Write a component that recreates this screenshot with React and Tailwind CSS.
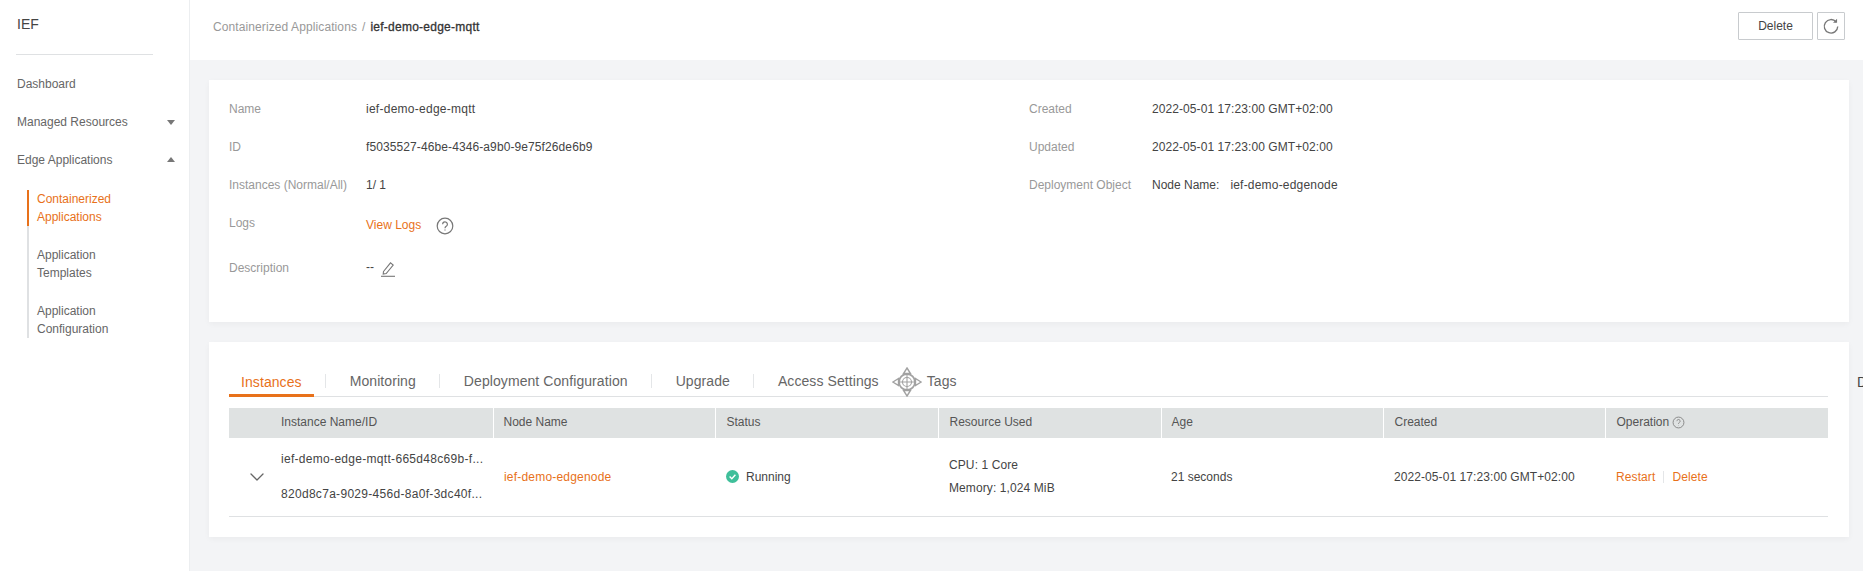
import React from 'react'
import { ChevronDown } from 'lucide-react'

const sans = '[font-family:"Liberation_Sans",Arial,sans-serif]'

const Caret = ({ up }) => (
  <svg width="12" height="8" viewBox="0 0 12 8" className="ml-auto mr-[12px]">
    <path d={up ? 'M6 1 L10 6 L2 6 Z' : 'M2 2 L10 2 L6 7 Z'} fill="#777" />
  </svg>
)

const SubItem = ({ lines, active }) => (
  <div className={`pl-[8px] border-l-2 -ml-[2px] h-[36px] leading-[18px] ${active ? 'border-[#e8711a] text-[#e8711a]' : 'border-transparent text-[#666]'}`}>
    {lines.map((l) => (
      <div key={l}>{l}</div>
    ))}
  </div>
)

const Sidebar = () => (
  <aside className="w-[190px] shrink-0 bg-white border-r border-[#eceef0] text-[12px]">
    <div className="pl-[17px] pt-[15px] h-[54px] text-[14px] leading-[18px] text-[#444]">IEF</div>
    <div className="ml-[16px] w-[137px] border-t border-[#dfe1e3]" />
    <nav className="pl-[17px] pt-[10px] text-[#666]">
      <div className="h-[38px] flex items-center">Dashboard</div>
      <div className="h-[38px] flex items-center">
        Managed Resources
        <Caret />
      </div>
      <div className="h-[38px] flex items-center">
        Edge Applications
        <Caret up />
      </div>
      <div className="ml-[10px] mt-[11px] w-[130px] border-l-2 border-[#dfe1e3] flex flex-col gap-[20px]">
        <SubItem lines={['Containerized', 'Applications']} active />
        <SubItem lines={['Application', 'Templates']} />
        <SubItem lines={['Application', 'Configuration']} />
      </div>
    </nav>
  </aside>
)

const DetailRow = ({ label, labelWidth, children, height = 'h-[38px]' }) => (
  <div className={`flex items-center ${height}`}>
    <div className="text-[#999] shrink-0" style={{ width: labelWidth }}>{label}</div>
    <div className="text-[#444] flex items-center">{children}</div>
  </div>
)

const tabs = ['Instances', 'Monitoring', 'Deployment Configuration', 'Upgrade', 'Access Settings', 'Tags']

const Tabs = () => (
  <div className="relative flex items-center h-[32px] border-b border-[#dfe1e3] text-[14px] tracking-[0.08px] text-[#666]">
    {tabs.map((t, i) => (
      <React.Fragment key={t}>
        {i > 0 && <span className="mx-[11.5px] h-[14px] w-px bg-[#e4e6e8]" />}
        <span className={`h-full px-[12px] flex items-center pt-[2px] ${i === 0 ? 'text-[#e8711a] border-b-[3px] border-[#e8711a] pt-[5px] -mb-px' : ''}`}>{t}</span>
      </React.Fragment>
    ))}
    {/* mouse cursor caught in the screenshot */}
    <svg width="30" height="30" viewBox="0 0 30 30" className="absolute left-[663px] top-[2px]" fill="#fff" stroke="#a2a2a2" strokeWidth="1.4">
      <path d="M15 1 L18.5 6.5 L11.5 6.5 Z" />
      <path d="M15 29 L18.5 23.5 L11.5 23.5 Z" />
      <path d="M1 15 L6.5 11.5 L6.5 18.5 Z" />
      <path d="M29 15 L23.5 11.5 L23.5 18.5 Z" />
      <circle cx="15" cy="15" r="8" strokeWidth="1.8" />
      <circle cx="15" cy="15" r="4.5" strokeWidth="1.1" />
      <path d="M15 7 L15 23 M7 15 L23 15" strokeWidth="1.1" />
    </svg>
  </div>
)

const Th = ({ children, last, pl = 'pl-[10px]' }) => (
  <th className={`${pl} pb-[2px] font-normal text-left ${last ? '' : 'border-r border-white'}`}>{children}</th>
)

const Table = () => (
  <table className="w-[1599px] mt-[11px] table-fixed border-collapse text-[12px]">
    <colgroup>
      <col className="w-[264px]" />
      <col className="w-[222px]" />
      <col className="w-[223px]" />
      <col className="w-[223px]" />
      <col className="w-[222px]" />
      <col className="w-[222px]" />
      <col className="w-[223px]" />
    </colgroup>
    <thead>
      <tr className="h-[30px] bg-[#dfe2e2] text-[#555]">
        <Th pl="pl-[52px]">Instance Name/ID</Th>
        <Th>Node Name</Th>
        <Th pl="pl-[11px]">Status</Th>
        <Th pl="pl-[11px]">Resource Used</Th>
        <Th>Age</Th>
        <Th pl="pl-[11px]">Created</Th>
        <Th last pl="pl-[11px]">
          <span className="flex items-center gap-[3px]">
            Operation
            <svg width="13" height="13" viewBox="0 0 24 24" fill="none" stroke="#777" strokeWidth="1.5">
              <circle cx="12" cy="12" r="10" />
              <path d="M9 9.5a3 3 0 1 1 4.5 2.6c-1 .6-1.5 1.2-1.5 2.4M12 17.5v.5" />
            </svg>
          </span>
        </Th>
      </tr>
    </thead>
    <tbody>
      <tr className="h-[78px] border-b border-[#dfe1e3] text-[#444]">
        <td className="pl-[16px]">
          <div className="flex items-center">
            <ChevronDown size={24} strokeWidth={1.3} color="#666" className="shrink-0" />
            <div className="ml-[12px] leading-[17px] tracking-[0.3px] flex flex-col gap-[18px]">
              <span>ief-demo-edge-mqtt-665d48c69b-f...</span>
              <span>820d8c7a-9029-456d-8a0f-3dc40f...</span>
            </div>
          </div>
        </td>
        <td className="pl-[11px] text-[#e8711a] tracking-[0.2px]">ief-demo-edgenode</td>
        <td className="pl-[11px]">
          <span className="flex items-center gap-[7px]">
            <svg width="13" height="13" viewBox="0 0 13 13">
              <circle cx="6.5" cy="6.5" r="6.5" fill="#3fbf9a" />
              <path d="M3.6 6.6 L5.8 8.7 L9.4 4.7" fill="none" stroke="#fff" strokeWidth="1.4" />
            </svg>
            Running
          </span>
        </td>
        <td className="pl-[11px] tracking-[0.1px]">
          <div className="leading-[23px]">CPU: 1 Core</div>
          <div className="leading-[23px]">Memory: 1,024 MiB</div>
        </td>
        <td className="pl-[10px]">21 seconds</td>
        <td className="pl-[11px] tracking-[0.08px]">2022-05-01 17:23:00 GMT+02:00</td>
        <td className="pl-[11px] text-[#e8711a]">
          <span className="flex items-center tracking-[0.1px]">
            Restart
            <span className="mx-[8px] h-[12px] w-px bg-[#e4e6e8]" />
            Delete
          </span>
        </td>
      </tr>
    </tbody>
  </table>
)

export default function App() {
  return (
    <div className={`relative flex h-[571px] w-[1863px] overflow-hidden bg-[#f3f4f6] ${sans}`}>
      <Sidebar />
      <main className="flex-1 min-w-0">
        <header className="h-[60px] bg-white flex items-start pt-[12px] pl-[23px] pr-[18px] text-[12px]">
          <span className="text-[#999] h-[28px] leading-[30px] tracking-[0.1px]">Containerized Applications</span>
          <span className="mx-[5px] text-[#999] h-[28px] leading-[30px]">/</span>
          <span className="text-[#333] h-[28px] leading-[30px] tracking-[0.25px] [-webkit-text-stroke:0.3px_#333]">ief-demo-edge-mqtt</span>
          <button className="ml-auto w-[75px] h-[28px] border border-[#c8cbce] text-[#444] rounded-[1px]">Delete</button>
          <button className="ml-[4px] w-[28px] h-[28px] border border-[#c8cbce] flex items-center justify-center rounded-[1px]">
            <svg width="18" height="18" viewBox="0 0 16 16" fill="none" stroke="#777" strokeWidth="1.2">
              <path d="M12.6 4.4 A6 6 0 1 0 14 8.5" />
              <path d="M13.4 1.6 L13.4 5.2 L9.8 5.2" fill="#777" stroke="none" />
            </svg>
          </button>
        </header>

        <div className="pl-[19px] pr-[14px] pt-[20px] flex flex-col gap-[20px]">
          <section className="h-[242px] bg-white shadow-[0_2px_6px_rgba(0,0,0,0.04)] pl-[20px] pt-[10px] text-[12px] grid grid-cols-[800px_1fr]">
            <div>
              <DetailRow label="Name" labelWidth={137}><span className="tracking-[0.26px]">ief-demo-edge-mqtt</span></DetailRow>
              <DetailRow label="ID" labelWidth={137}><span className="tracking-[0.1px]">f5035527-46be-4346-a9b0-9e75f26de6b9</span></DetailRow>
              <DetailRow label="Instances (Normal/All)" labelWidth={137}>1/ 1</DetailRow>
              <DetailRow label="Logs" labelWidth={137}>
                <span className="text-[#e8711a] mt-[3px]">View Logs</span>
                <svg width="18" height="18" viewBox="0 0 18 18" fill="none" stroke="#777" strokeWidth="1.2" className="ml-[15px] mt-[5px]">
                  <circle cx="9" cy="9" r="7.8" />
                  <path d="M6.6 7.2a2.4 2.4 0 1 1 3.6 2.1c-.8.5-1.2 1-1.2 1.9M9 12.6v1" />
                </svg>
              </DetailRow>
              <DetailRow label={<span className="relative top-px">Description</span>} labelWidth={137} height="h-[50px]">
                --
                <svg width="16" height="16" viewBox="0 0 16 16" fill="none" stroke="#777" strokeWidth="1.1" className="ml-[6px] mt-[4px]">
                  <path d="M3.5 10.5 L10.5 1.8 L13.2 4 L6.2 12.5 L3.2 13 Z" />
                  <path d="M1 15.3 H15" />
                </svg>
              </DetailRow>
            </div>
            <div>
              <DetailRow label="Created" labelWidth={123}><span className="tracking-[0.08px]">2022-05-01 17:23:00 GMT+02:00</span></DetailRow>
              <DetailRow label="Updated" labelWidth={123}><span className="tracking-[0.08px]">2022-05-01 17:23:00 GMT+02:00</span></DetailRow>
              <DetailRow label="Deployment Object" labelWidth={123}>
                <span>Node Name:</span>
                <span className="ml-[11px] tracking-[0.2px]">ief-demo-edgenode</span>
              </DetailRow>
            </div>
          </section>

          <section className="bg-white shadow-[0_2px_6px_rgba(0,0,0,0.04)] pl-[20px] pr-[21px] pt-[23px] pb-[20px]">
            <Tabs />
            <Table />
          </section>
        </div>
      </main>
      {/* clipped tab label sticking out past the card */}
      <span className="absolute left-[1857px] top-[372px] text-[14px] text-[#444]">D</span>
    </div>
  )
}
